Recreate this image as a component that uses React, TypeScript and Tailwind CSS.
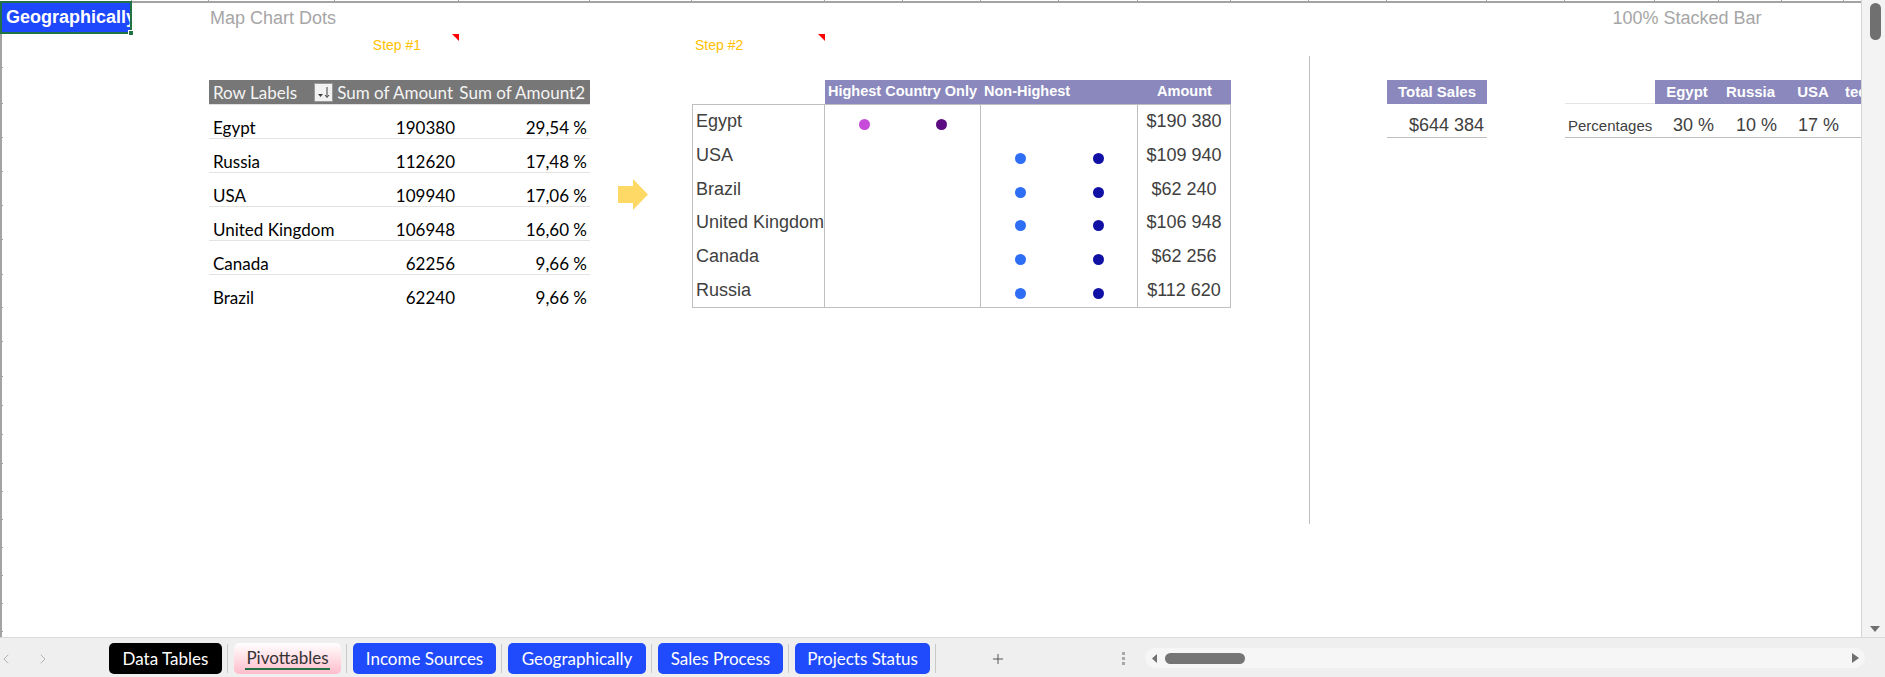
import { ChevronLeft, ChevronRight, Plus } from "lucide-react"

const pivotRows = [
  ["Egypt", "190380", "29,54 %"],
  ["Russia", "112620", "17,48 %"],
  ["USA", "109940", "17,06 %"],
  ["United Kingdom", "106948", "16,60 %"],
  ["Canada", "62256", "9,66 %"],
  ["Brazil", "62240", "9,66 %"],
]

const dotRows = [
  { name: "Egypt", top: true, amount: "$190 380" },
  { name: "USA", top: false, amount: "$109 940" },
  { name: "Brazil", top: false, amount: "$62 240" },
  { name: "United Kingdom", top: false, amount: "$106 948" },
  { name: "Canada", top: false, amount: "$62 256" },
  { name: "Russia", top: false, amount: "$112 620" },
]

function CommentMark() {
  return (
    <svg className="absolute top-0 right-0" width="7" height="7" viewBox="0 0 7 7">
      <polygon points="0,0 7,0 7,7" fill="#ff0000" />
    </svg>
  )
}

function SortButton() {
  return (
    <div className="w-[19px] h-[19px] bg-[#f2f2f2] border border-[#9a9a9a] flex items-center justify-center">
      <svg width="15" height="15" viewBox="0 0 15 15">
        <polygon points="2,9 7,9 4.5,12" fill="#404040" />
        <line x1="11" y1="2" x2="11" y2="12" stroke="#404040" strokeWidth="1" />
        <polyline points="9,10 11,12.5 13,10" fill="none" stroke="#404040" strokeWidth="1" />
      </svg>
    </div>
  )
}

function TopRuler() {
  return (
    <div className="h-[3px] shrink-0 border-b-2 border-[#a3a3a3] grid grid-cols-[132px_77px_126px_124px_131px_102px_133px_78px_78px_78px_79px_93px_78px_78px_100px_78px_90px_64px_63px_62px_1fr]">
      {Array.from({ length: 20 }).map((_, i) => (
        <div key={i} className="border-r border-[#a3a3a3]" />
      ))}
      <div />
    </div>
  )
}

function LeftRuler() {
  return (
    <div className="w-[3px] shrink-0 border-l-2 border-[#a3a3a3] grid grid-rows-[31px_34px_36px_34px_34px_34px_34px_35px_33px_34px_35px_29px_29px_29px_28px_28px_28px_28px_28px_28px_1fr]">
      {Array.from({ length: 20 }).map((_, i) => (
        <div key={i} className="border-b border-[#a3a3a3]" />
      ))}
      <div />
    </div>
  )
}

function PivotTable() {
  return (
    <div className="col-start-3 col-span-3 row-start-4 row-span-7 flex flex-col font-['Lato',sans-serif] text-[17px]">
      <div className="h-[24px] grid grid-cols-[126px_124px_131px] bg-[#777777] text-[#f4f4f4] border-b border-[#e0e0e0] box-content">
        <div className="flex items-center justify-between pl-[4px] pr-[2px]">
          <span>Row Labels</span>
          <SortButton />
        </div>
        <div className="flex items-center justify-end pr-[6px] whitespace-nowrap">Sum of Amount</div>
        <div className="flex items-center justify-end pr-[5px] whitespace-nowrap">Sum of Amount2</div>
      </div>
      {pivotRows.map((r, i) => (
        <div
          key={r[0]}
          className={
            i < pivotRows.length - 1
              ? "h-[34px] grid grid-cols-[126px_124px_131px] border-b border-[#e3e3e3] text-black"
              : "h-[34px] grid grid-cols-[126px_124px_131px] text-black"
          }
        >
          <div className="flex items-center pt-[10px] pl-[4px] whitespace-nowrap">{r[0]}</div>
          <div className="flex items-center justify-end pt-[10px] pr-[4px]">{r[1]}</div>
          <div className="flex items-center justify-end pt-[10px] pr-[3px]">{r[2]}</div>
        </div>
      ))}
    </div>
  )
}

function DotsTable() {
  return (
    <div className="col-start-7 col-span-6 row-start-4 row-span-7 flex flex-col">
      <div className="h-[24px] flex text-white font-bold text-[14.5px]">
        <div className="w-[133px]" />
        <div className="flex-1 bg-[#8a88bc] grid grid-cols-[156px_157px_93px]">
          <div className="flex items-center pl-[3px] whitespace-nowrap">Highest Country Only</div>
          <div className="flex items-center pl-[3px] whitespace-nowrap">Non-Highest</div>
          <div className="flex items-center justify-center">Amount</div>
        </div>
      </div>
      <div className="h-[204px] border border-[#bfbfbf] grid grid-cols-[132px_78px_78px_78px_79px_92px] grid-rows-6 text-[18px] text-[#404040]">
        {dotRows.map((r) => (
          <div key={r.name} className="contents">
            <div className="border-r border-[#bfbfbf] flex items-center pl-[3px] whitespace-nowrap">{r.name}</div>
            <div className="flex items-center justify-center pt-[6px]">
              {r.top && <span className="w-[11px] h-[11px] rounded-full bg-[#c54bd8]" />}
            </div>
            <div className="border-r border-[#bfbfbf] flex items-center justify-center pt-[6px]">
              {r.top && <span className="w-[11px] h-[11px] rounded-full bg-[#5a0c80]" />}
            </div>
            <div className="flex items-center justify-center pt-[6px]">
              {!r.top && <span className="w-[11px] h-[11px] rounded-full bg-[#2e6ef5]" />}
            </div>
            <div className="border-r border-[#bfbfbf] flex items-center justify-center pt-[6px]">
              {!r.top && <span className="w-[11px] h-[11px] rounded-full bg-[#1010a4]" />}
            </div>
            <div className="flex items-center justify-center whitespace-nowrap">{r.amount}</div>
          </div>
        ))}
      </div>
    </div>
  )
}

function Sheet() {
  return (
    <div className="flex-1 grid grid-cols-[129px_77px_126px_124px_131px_102px_133px_78px_78px_78px_79px_93px_78px_78px_100px_78px_90px_64px_63px_62px_1fr] grid-rows-[31px_22px_24px_24px_repeat(6,34px)_216px_1fr]">
      {/* selected cell */}
      <div className="col-start-1 row-start-1 relative -ml-[3px] -mt-[2px] border-2 border-[#217346]">
        <div className="h-full bg-[#1d48fb] overflow-hidden flex items-center">
          <span className="pl-[4px] text-[18px] font-bold text-white whitespace-nowrap">Geographically</span>
        </div>
        <span className="absolute right-[-4px] bottom-[-4px] w-[6px] h-[6px] bg-[#217346] border border-white" />
      </div>

      <div className="col-start-3 row-start-1 flex items-center pl-[1px] text-[18px] text-[#a6a6a6] whitespace-nowrap">
        Map Chart Dots
      </div>
      <div className="col-start-18 row-start-1 flex items-center justify-center text-[18px] text-[#a6a6a6] whitespace-nowrap">
        100% Stacked Bar
      </div>

      <div className="col-start-4 row-start-2 relative flex items-center justify-center text-[14px] text-[#ffc000]">
        Step #1
        <CommentMark />
      </div>
      <div className="col-start-7 row-start-2 relative flex items-center pl-[3px] text-[14px] text-[#ffc000]">
        Step #2
        <CommentMark />
      </div>

      <PivotTable />

      <div className="col-start-6 row-start-7 row-span-2 pl-[28px] pt-[7px]">
        <svg width="30" height="31" viewBox="0 0 30 31">
          <polygon points="0,7 15,7 15,0 30,15.5 15,31 15,24 0,24" fill="#ffd966" />
        </svg>
      </div>

      <DotsTable />

      <div className="col-start-14 row-start-3 row-span-9 border-l border-[#bfbfbf]" />

      <div className="col-start-15 row-start-4 row-span-2 flex flex-col">
        <div className="h-[24px] bg-[#8a88bc] text-white font-bold text-[15px] flex items-center justify-center">
          Total Sales
        </div>
        <div className="h-[34px] border-b border-[#bfbfbf] flex items-center justify-end pt-[10px] pr-[3px] text-[18px] text-[#404040]">
          $644 384
        </div>
      </div>

      <div className="col-start-17 col-span-5 row-start-4 row-span-2 grid grid-cols-[90px_64px_63px_62px_1fr] grid-rows-[24px_34px] overflow-hidden">
        <div className="border-b border-[#e3e3e3]" />
        <div className="bg-[#8a88bc] text-white font-bold text-[15px] flex items-center justify-center">Egypt</div>
        <div className="bg-[#8a88bc] text-white font-bold text-[15px] flex items-center justify-center">Russia</div>
        <div className="bg-[#8a88bc] text-white font-bold text-[15px] flex items-center justify-center">USA</div>
        <div className="bg-[#8a88bc] text-white font-bold text-[15px] flex items-center pl-[1px] overflow-hidden whitespace-nowrap">ted</div>
        <div className="border-b border-[#bfbfbf] flex items-center pt-[12px] pl-[3px] text-[15px] text-[#404040]">Percentages</div>
        <div className="border-b border-[#bfbfbf] flex items-center justify-end pt-[10px] pr-[5px] text-[18px] text-[#404040]">30 %</div>
        <div className="border-b border-[#bfbfbf] flex items-center justify-end pt-[10px] pr-[5px] text-[18px] text-[#404040]">10 %</div>
        <div className="border-b border-[#bfbfbf] flex items-center justify-end pt-[10px] pr-[5px] text-[18px] text-[#404040]">17 %</div>
        <div className="border-b border-[#bfbfbf]" />
      </div>
    </div>
  )
}

function VScroll() {
  return (
    <div className="w-[23px] h-[637px] bg-[#f3f3f3] flex flex-col justify-between">
      <div className="ml-[8px] mt-[3px] w-[11px] h-[37px] rounded-full bg-[#707070]" />
      <svg className="ml-[8px] mb-[5px]" width="10" height="6" viewBox="0 0 10 6">
        <polygon points="0,0 10,0 5,6" fill="#707070" />
      </svg>
    </div>
  )
}

function Sep() {
  return <div className="ml-[5px] mr-[6px] w-px h-[29px] mt-[1px] bg-[#c9c9c9]" />
}

function TabBar() {
  return (
    <div className="h-[40px] bg-[#efefef] border-t border-[#d9d9d9] flex items-start pt-[5px] font-['Lato',sans-serif] text-[17px]">
      <div className="w-[109px] h-[31px] flex items-center">
        <ChevronLeft className="-ml-[2px] w-[16px] h-[16px] text-[#b3b3b3]" strokeWidth={1.5} />
        <ChevronRight className="ml-[21px] w-[16px] h-[16px] text-[#b3b3b3]" strokeWidth={1.5} />
      </div>
      <div className="w-[113px] h-[31px] rounded-[5px] bg-black text-white flex items-center justify-center">Data Tables</div>
      <Sep />
      <div className="w-[107px] h-[31px] rounded-[5px] bg-gradient-to-b from-white to-[#ffbccb] text-[#333333] flex flex-col items-center justify-center">
        <span className="leading-[20px] border-b-2 border-[#217346] px-[1px]">Pivottables</span>
      </div>
      <Sep />
      <div className="w-[143px] h-[31px] rounded-[5px] bg-[#1f4bfc] text-white flex items-center justify-center">Income Sources</div>
      <Sep />
      <div className="w-[138px] h-[31px] rounded-[5px] bg-[#1f4bfc] text-white flex items-center justify-center">Geographically</div>
      <Sep />
      <div className="w-[125px] h-[31px] rounded-[5px] bg-[#1f4bfc] text-white flex items-center justify-center">Sales Process</div>
      <Sep />
      <div className="w-[135px] h-[31px] rounded-[5px] bg-[#1f4bfc] text-white flex items-center justify-center">Projects Status</div>
      <Sep />
      <div className="h-[31px] flex items-center ml-[48px]">
        <Plus className="w-[16px] h-[16px] text-[#404040]" strokeWidth={1.3} />
      </div>
      <div className="h-[31px] flex flex-col items-center justify-center gap-[2px] ml-[116px]">
        <span className="w-[3px] h-[3px] bg-[#a8a8a8]" />
        <span className="w-[3px] h-[3px] bg-[#a8a8a8]" />
        <span className="w-[3px] h-[3px] bg-[#a8a8a8]" />
      </div>
      <div className="ml-[20px] mt-[5px] w-[720px] h-[20px] rounded-full bg-[#f6f6f6] flex items-center">
        <svg className="ml-[7px]" width="5" height="9" viewBox="0 0 5 9">
          <polygon points="5,0 5,9 0,4.5" fill="#707070" />
        </svg>
        <div className="ml-[8px] w-[80px] h-[11px] rounded-full bg-[#757575]" />
        <svg className="ml-auto mr-[6px]" width="7" height="10" viewBox="0 0 7 10">
          <polygon points="0,0 7,5 0,10" fill="#707070" />
        </svg>
      </div>
    </div>
  )
}

export default function App() {
  return (
    <div className="w-[1885px] h-[677px] overflow-hidden bg-white flex flex-col font-['Liberation_Sans',Arial,sans-serif]">
      <div className="flex h-[637px]">
        <div className="w-[1862px] flex flex-col overflow-hidden border-r border-[#d4d4d4]">
          <TopRuler />
          <div className="flex flex-1">
            <LeftRuler />
            <Sheet />
          </div>
        </div>
        <VScroll />
      </div>
      <TabBar />
    </div>
  )
}
